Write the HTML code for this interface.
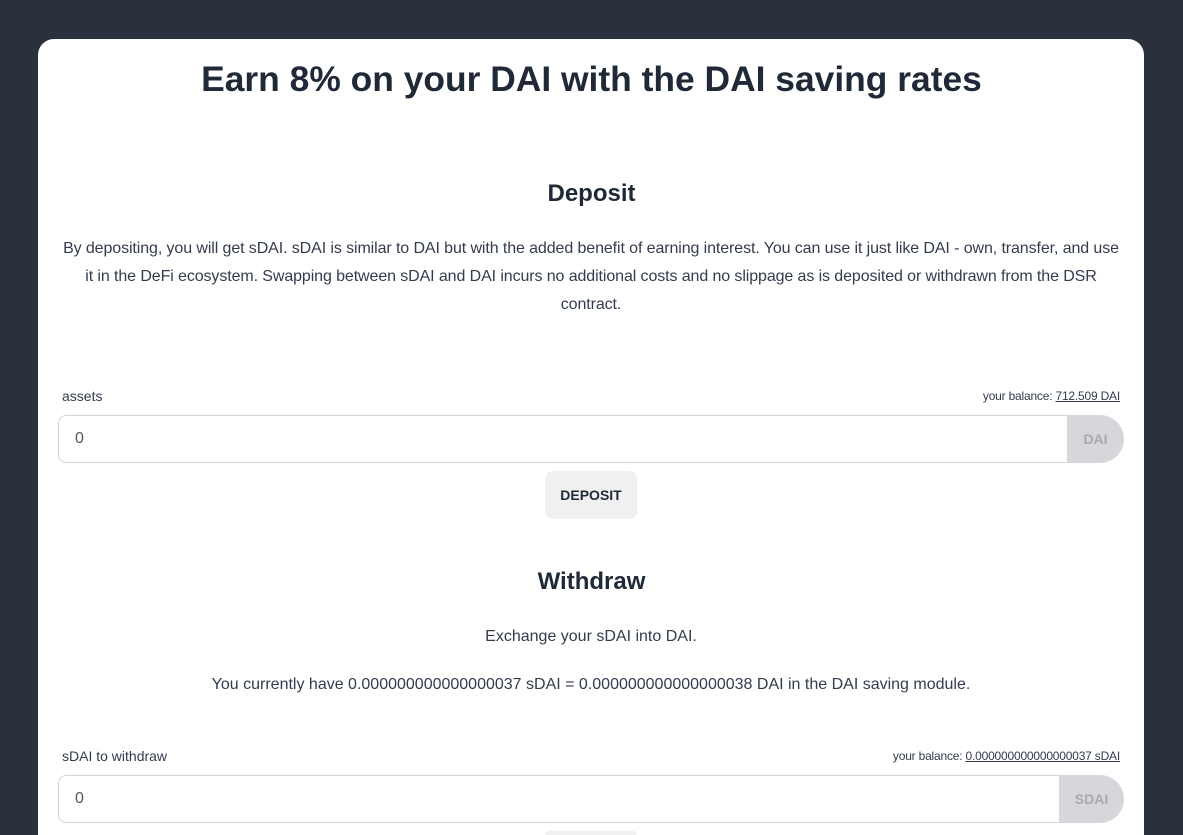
<!DOCTYPE html>
<html style="overflow:hidden;height:835px"><head><meta charset="utf-8"><style>
body{margin:0;background:#2a303c;font-family:"Liberation Sans",sans-serif;color:#1f2937;width:1183px;height:835px;overflow:hidden;position:relative}
.card{position:absolute;left:38px;top:39px;width:1106px;height:796px;background:#fff;border-radius:16px 16px 0 0}
h1{position:absolute;top:57px;left:0;width:1183px;text-align:center;margin:0;font-size:35.4px;font-weight:bold;line-height:44px}
h2{position:absolute;left:0;width:1183px;text-align:center;margin:0;font-size:24px;font-weight:bold}
p{position:absolute;left:40px;width:1102px;text-align:center;margin:0;font-size:16px;line-height:28px;color:#333c4d;white-space:nowrap}
.lbl{position:absolute;font-size:14px;color:#333c4d}
.bal{position:absolute;right:63px;font-size:12px;color:#333c4d;letter-spacing:-0.2px}
.bal u{color:#333c4d}
.inp{position:absolute;left:58px;height:48px;border:1px solid #d1d5db;border-radius:8px 0 0 8px;box-sizing:border-box;font-size:16px;color:#555;padding:14px 16px}
.unit{position:absolute;height:48px;background:#d6d7da;border-radius:0 24px 24px 0;color:#a9aaad;font-weight:bold;font-size:14px;line-height:48px;text-align:center}
.btn{position:absolute;left:545px;width:92px;height:48px;background:#f0f0f1;border-radius:8px;font-weight:bold;font-size:14px;line-height:48px;text-align:center}
</style></head><body>
<div class="card"></div>
<h1>Earn 8% on your DAI with the DAI saving rates</h1>
<h2 style="top:180px">Deposit</h2>
<p style="top:235px;letter-spacing:-0.1px">By depositing, you will get sDAI. sDAI is similar to DAI but with the added benefit of earning interest. You can use it just like DAI - own, transfer, and use<br>it in the DeFi ecosystem. Swapping between sDAI and DAI incurs no additional costs and no slippage as is deposited or withdrawn from the DSR<br>contract.</p>
<div class="lbl" style="left:62px;top:388px">assets</div>
<div class="bal" style="top:389px">your balance: <u>712.509 DAI</u></div>
<div class="inp" style="top:415px;width:1010px">0</div>
<div class="unit" style="top:415px;left:1067px;width:57px">DAI</div>
<div class="btn" style="top:471px">DEPOSIT</div>
<h2 style="top:568px">Withdraw</h2>
<p style="top:623px">Exchange your sDAI into DAI.</p>
<p style="top:671px">You currently have 0.000000000000000037 sDAI = 0.000000000000000038 DAI in the DAI saving module.</p>
<div class="lbl" style="left:62px;top:748px">sDAI to withdraw</div>
<div class="bal" style="top:749px">your balance: <u>0.000000000000000037 sDAI</u></div>
<div class="inp" style="top:775px;width:1002px">0</div>
<div class="unit" style="top:775px;left:1059px;width:65px">SDAI</div>
<div class="btn" style="top:831px;height:4px;border-radius:8px 8px 0 0"></div>
</body></html>
